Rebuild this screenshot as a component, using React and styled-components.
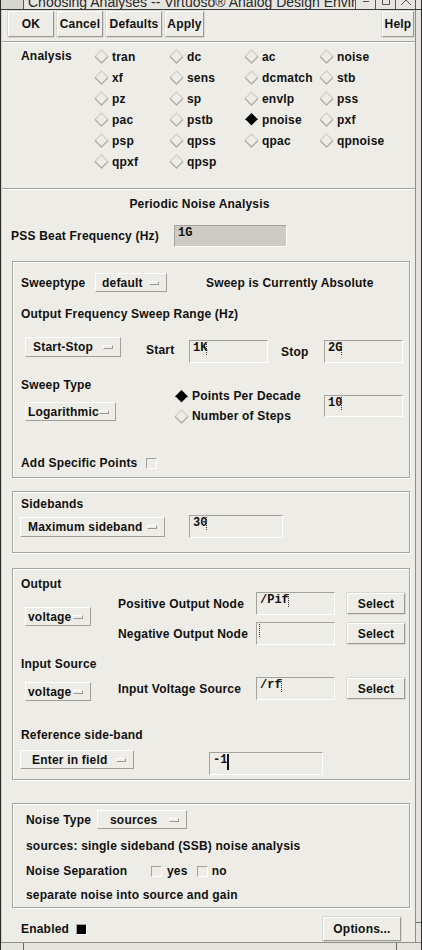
import React from "react"
import styled, { createGlobalStyle } from "styled-components"

const GlobalStyle = createGlobalStyle`
  html, body {
    margin: 0;
    padding: 0;
    background: #edece6;
  }
`

const Window = styled.div`
  width: 422px;
  height: 950px;
  overflow: hidden;
  box-sizing: border-box;
  display: flex;
  flex-direction: column;
  background: #edece6;
  border-left: 1px solid #2c2c2c;
  border-right: 1px solid #2c2c2c;
  font-family: "Liberation Sans", Arial, sans-serif;
  font-weight: bold;
  font-size: 12px;
  letter-spacing: 0.2px;
  color: #111;
`

const TitleStrip = styled.div`
  flex: none;
  height: 9px;
  display: flex;
  align-items: flex-end;
  overflow: hidden;
  background: #e6e5e0;
  border-bottom: 1px solid #3a3a3a;
`

const TitleIcon = styled.div`
  flex: none;
  width: 22px;
  height: 9px;
  background: #d6d5d0;
  border-right: 1px solid #5a5a5a;
`

const TitleText = styled.div`
  flex: 1;
  height: 9px;
  padding-left: 4px;
  display: flex;
  align-items: flex-end;
  font-weight: normal;
  font-size: 14px;
  line-height: 13px;
  color: #2a2a2a;
  white-space: nowrap;
  overflow: hidden;
  letter-spacing: 0;
`

const TitleButton = styled.div`
  flex: none;
  width: 19px;
  height: 9px;
  display: flex;
  align-items: flex-start;
  justify-content: center;
  border-left: 1px solid #5a5a5a;
  &:last-child {
    border-right: 1px solid #5a5a5a;
    margin-right: 5px;
  }
`

const Body = styled.div`
  flex: 1;
  display: flex;
  min-height: 0;
`

const Panel = styled.div`
  width: 415px;
  box-sizing: border-box;
  display: flex;
  flex-direction: column;
  border-left: 1px solid #cfcec9;
  border-right: 1px solid #8f8e89;
`

const RightEdge = styled.div`
  flex: 1;
  display: flex;
  flex-direction: column;
  justify-content: flex-end;
  background: #e4e3de;
`

const EdgeTick = styled.div`
  height: 1px;
  margin-bottom: 19px;
  background: #6a6a66;
`

const ButtonBar = styled.div`
  height: 31px;
  box-sizing: border-box;
  display: flex;
  align-items: flex-start;
  gap: 3px;
  padding: 1px 1px 0 6px;
`

const Button = styled.div`
  box-sizing: border-box;
  width: ${(p) => p.$w}px;
  height: ${(p) => p.$h || 21}px;
  display: flex;
  align-items: center;
  justify-content: center;
  background: #edece6;
  border: 1px solid;
  border-color: #ffffff #9a9994 #9a9994 #ffffff;
  box-shadow: 0 0 0 0.5px #c4c3be;
  white-space: nowrap;
  &.push-right {
    margin-left: auto;
  }
`

const Separator = styled.div`
  height: 1px;
  background: #9f9e99;
  border-bottom: 1px solid #ffffff;
`

const AnalysisGrid = styled.div`
  display: grid;
  grid-template-columns: 73px repeat(4, 75px);
  grid-auto-rows: 21px;
  padding: 3px 0 16px 19px;
`

const GridLabel = styled.div`
  grid-row: 1 / span 6;
  line-height: 21px;
`

const Radio = styled.div`
  display: flex;
  align-items: center;
  gap: 3px;
  height: ${(p) => p.$h || 21}px;
`

const DiamondSvg = styled.svg`
  flex: none;
  display: block;
`

const Heading = styled.div`
  margin-top: 7px;
  line-height: 14px;
  text-align: center;
  padding-right: 18px;
`

const PssRow = styled.div`
  margin-top: 14px;
  padding-left: 9px;
  height: 22px;
  display: flex;
  align-items: center;
`

const Label = styled.div`
  flex: none;
  line-height: 14px;
  white-space: nowrap;
  width: ${(p) => (p.$w ? `${p.$w}px` : "auto")};
  margin-top: ${(p) => p.$mt || 0}px;
  margin-left: ${(p) => p.$ml || 0}px;
`

const Field = styled.div`
  flex: none;
  box-sizing: border-box;
  width: ${(p) => p.$w}px;
  height: ${(p) => p.$h || 23}px;
  margin-top: ${(p) => p.$mt || 0}px;
  margin-left: ${(p) => p.$ml || 0}px;
  padding: 1px 0 0 3px;
  background: ${(p) => (p.$disabled ? "#cdcbc4" : "#edece6")};
  border: 1px solid;
  border-color: #a3a29d #ffffff #ffffff #a3a29d;
  font-family: "Liberation Mono", "Courier New", monospace;
  font-weight: bold;
  font-size: 12px;
  line-height: 13px;
  letter-spacing: 0;
  color: #111;
  display: flex;
  align-items: flex-start;
  white-space: pre;
`

const Caret = styled.span`
  display: inline-block;
  width: 2px;
  height: 13px;
  margin-left: -1px;
  border-left: 1px dotted #333;
  &.solid {
    border-left: 2px solid #111;
    margin-left: 0;
    height: 16px;
  }
`

const OptionMenu = styled.div`
  flex: none;
  box-sizing: border-box;
  width: ${(p) => p.$w}px;
  height: ${(p) => p.$h || 20}px;
  margin-top: ${(p) => p.$mt || 0}px;
  margin-left: ${(p) => p.$ml || 0}px;
  padding-left: ${(p) => p.$pad || 6}px;
  padding-right: 7px;
  display: flex;
  align-items: center;
  background: #edece6;
  border: 1px solid;
  border-color: #ffffff #a09f9a #a09f9a #ffffff;
  white-space: nowrap;
`

const Indicator = styled.span`
  margin-left: auto;
  flex: none;
  width: 10px;
  height: 4px;
  box-sizing: border-box;
  border: 1px solid;
  border-color: #ffffff #9a9994 #9a9994 #ffffff;
`

const Box = styled.div`
  box-sizing: border-box;
  width: 398px;
  margin: ${(p) => p.$mt}px 0 0 10px;
  padding: ${(p) => p.$pad};
  border: 1px solid #a5a49f;
  box-shadow: 1px 1px 0 #ffffff, inset 1px 1px 0 #ffffff;
  display: flex;
  flex-direction: column;
`

const Row = styled.div`
  display: flex;
  align-items: ${(p) => p.$align || "center"};
  height: ${(p) => (p.$h ? `${p.$h}px` : "auto")};
  margin-top: ${(p) => p.$mt || 0}px;
`

const SweepTypeBlock = styled.div`
  margin-top: 15px;
  display: grid;
  grid-template-columns: 153px 150px 79px;
  align-items: start;
`

const Column = styled.div`
  display: flex;
  flex-direction: column;
  align-items: flex-start;
  margin-top: ${(p) => p.$mt || 0}px;
`

const Check = styled.span`
  flex: none;
  display: inline-block;
  box-sizing: border-box;
  width: 11px;
  height: 11px;
  margin-left: ${(p) => p.$ml || 0}px;
  border: 1px solid;
  border-color: #a3a29d #ffffff #ffffff #a3a29d;
  background: ${(p) => (p.$on ? "#000" : "#edece6")};
`

const NodeGrid = styled.div`
  display: grid;
  grid-template-columns: 97px 138px 91px 58px;
  grid-auto-rows: 23px;
  row-gap: 7px;
  align-items: center;
  margin-top: ${(p) => p.$mt || 0}px;
`

const SpanMenu = styled(OptionMenu)`
  grid-row: 1 / span ${(p) => p.$rows || 1};
  align-self: ${(p) => (p.$rows > 1 ? "center" : "start")};
`

const BottomRow = styled.div`
  margin-top: 9px;
  height: 24px;
  display: flex;
  align-items: center;
  padding: 0 14px 0 19px;
`

const Footer = styled.div`
  flex: none;
  height: 7px;
  display: flex;
  border-top: 1px solid #8f8e89;
  background: #e4e3de;
`

const FooterCell = styled.div`
  width: ${(p) => (p.$w ? `${p.$w}px` : "auto")};
  flex: ${(p) => (p.$w ? "none" : 1)};
  border-right: 1px solid #6a6a66;
  &:last-child {
    border-right: none;
  }
`

const Diamond = ({ on }) => (
  <DiamondSvg width="15" height="15" viewBox="0 0 15 15">
    {on ? (
      <>
        <polygon points="7.5,1 14,7.5 7.5,14 1,7.5" fill="#000" />
        <polyline points="1.5,8 7.5,14 13.5,8" fill="none" stroke="#ffffff" strokeWidth="1" />
      </>
    ) : (
      <>
        <polyline points="1,7.5 7.5,1 14,7.5" fill="none" stroke="#d3d2cd" strokeWidth="1.3" />
        <polyline points="1,7.5 7.5,14 14,7.5" fill="none" stroke="#aeada8" strokeWidth="1.3" />
      </>
    )}
  </DiamondSvg>
)

const WinIcon = ({ kind }) => (
  <svg width="12" height="6" viewBox="0 0 12 6">
    {kind === "min" && <line x1="3" y1="1.5" x2="9" y2="1.5" stroke="#555" strokeWidth="1" />}
    {kind === "max" && <polyline points="2.5,0 2.5,4.5 9.5,4.5 9.5,0" fill="none" stroke="#555" strokeWidth="1" />}
    {kind === "close" && (
      <>
        <line x1="6" y1="0" x2="1" y2="5" stroke="#555" strokeWidth="1" />
        <line x1="6" y1="0" x2="11" y2="5" stroke="#555" strokeWidth="1" />
      </>
    )}
  </svg>
)

const analyses = [
  "tran", "dc", "ac", "noise",
  "xf", "sens", "dcmatch", "stb",
  "pz", "sp", "envlp", "pss",
  "pac", "pstb", "pnoise", "pxf",
  "psp", "qpss", "qpac", "qpnoise",
  "qpxf", "qpsp"
]

const App = () => {
  return (
    <>
      <GlobalStyle />
      <Window>
        <TitleStrip>
          <TitleIcon />
          <TitleText>Choosing Analyses -- Virtuoso® Analog Design Environment (1)</TitleText>
          <TitleButton><WinIcon kind="min" /></TitleButton>
          <TitleButton><WinIcon kind="max" /></TitleButton>
          <TitleButton><WinIcon kind="close" /></TitleButton>
        </TitleStrip>
        <Body>
          <Panel>
            <ButtonBar>
              <Button $w={46} $h={26}>OK</Button>
              <Button $w={46} $h={26}>Cancel</Button>
              <Button $w={56} $h={26}>Defaults</Button>
              <Button $w={39} $h={26}>Apply</Button>
              <Button className="push-right" $w={32} $h={26}>Help</Button>
            </ButtonBar>
            <Separator />

            <AnalysisGrid>
              <GridLabel>Analysis</GridLabel>
              {analyses.map((name) => (
                <Radio key={name}>
                  <Diamond on={name === "pnoise"} />
                  {name}
                </Radio>
              ))}
            </AnalysisGrid>
            <Separator />

            <Heading>Periodic Noise Analysis</Heading>
            <PssRow>
              <Label $w={163}>PSS Beat Frequency (Hz)</Label>
              <Field $w={113} $h={22} $disabled>1G</Field>
            </PssRow>

            <Box $mt={14} $pad="11px 8px 7px 8px">
              <Row $h={19}>
                <Label $w={74}>Sweeptype</Label>
                <OptionMenu $w={72} $h={19} $pad={6}>default<Indicator /></OptionMenu>
                <Label $ml={39}>Sweep is Currently Absolute</Label>
              </Row>
              <Label $mt={15}>Output Frequency Sweep Range (Hz)</Label>
              <Row $align="flex-start" $mt={16}>
                <OptionMenu $w={96} $ml={4} $pad={7}>Start-Stop<Indicator /></OptionMenu>
                <Label $w={43} $mt={6} $ml={25}>Start</Label>
                <Field $w={79} $mt={3}>1K<Caret /></Field>
                <Label $w={43} $mt={8} $ml={13}>Stop</Label>
                <Field $w={79} $mt={3}>2G<Caret /></Field>
              </Row>
              <SweepTypeBlock>
                <Column>
                  <Label>Sweep Type</Label>
                  <OptionMenu $w={91} $h={19} $mt={10} $ml={4} $pad={2}>Logarithmic<Indicator /></OptionMenu>
                </Column>
                <Column $mt={8}>
                  <Radio $h={20}><Diamond on />Points Per Decade</Radio>
                  <Radio $h={20}><Diamond />Number of Steps</Radio>
                </Column>
                <Column $mt={17}>
                  <Field $w={79} $h={22}>10<Caret /></Field>
                </Column>
              </SweepTypeBlock>
              <Row $h={14} $mt={30}>
                <Label $w={125}>Add Specific Points</Label>
                <Check />
              </Row>
            </Box>

            <Box $mt={13} $pad="5px 8px 14px 8px">
              <Label>Sidebands</Label>
              <Row $align="flex-start" $mt={4}>
                <OptionMenu $w={145} $mt={2} $ml={-1} $pad={7}>Maximum sideband<Indicator /></OptionMenu>
                <Field $w={94} $ml={24}>30<Caret /></Field>
              </Row>
            </Box>

            <Box $mt={15} $pad="8px 8px 4px 8px">
              <Label>Output</Label>
              <NodeGrid $mt={1}>
                <SpanMenu $rows={2} $w={66} $h={19} $ml={4} $pad={2} style={{ marginBottom: 4 }}>
                  voltage<Indicator />
                </SpanMenu>
                <Label>Positive Output Node</Label>
                <Field $w={79}>/Pif<Caret /></Field>
                <Button $w={58}>Select</Button>
                <Label>Negative Output Node</Label>
                <Field $w={79}><Caret /></Field>
                <Button $w={58}>Select</Button>
              </NodeGrid>
              <Label $mt={12}>Input Source</Label>
              <NodeGrid $mt={6}>
                <SpanMenu $w={66} $h={19} $mt={5} $ml={4} $pad={2}>voltage<Indicator /></SpanMenu>
                <Label>Input Voltage Source</Label>
                <Field $w={79}>/rf<Caret /></Field>
                <Button $w={58}>Select</Button>
              </NodeGrid>
              <Label $mt={28}>Reference side-band</Label>
              <Row $align="flex-start" $mt={8}>
                <OptionMenu $w={114} $h={19} $ml={-1} $pad={11}>Enter in field<Indicator /></OptionMenu>
                <Field $w={114} $mt={2} $ml={75}>-1<Caret className="solid" /></Field>
              </Row>
            </Box>

            <Box $mt={23} $pad="6px 8px 5px 13px">
              <Row $h={19}>
                <Label $w={71}>Noise Type</Label>
                <OptionMenu $w={90} $h={19} $pad={12}>sources<Indicator /></OptionMenu>
              </Row>
              <Label $mt={10}>sources: single sideband (SSB) noise analysis</Label>
              <Row $h={14} $mt={11}>
                <Label $w={125}>Noise Separation</Label>
                <Check />
                <Label $ml={5}>yes</Label>
                <Check $ml={9} />
                <Label $ml={4}>no</Label>
              </Row>
              <Label $mt={10}>separate noise into source and gain</Label>
            </Box>

            <BottomRow>
              <Label $w={55}>Enabled</Label>
              <Check $on />
              <Button className="push-right" $w={78} $h={24}>Options...</Button>
            </BottomRow>
          </Panel>
          <RightEdge>
            <EdgeTick />
          </RightEdge>
        </Body>
        <Footer>
          <FooterCell $w={22} />
          <FooterCell $w={372} />
          <FooterCell />
        </Footer>
      </Window>
    </>
  )
}

export default App
